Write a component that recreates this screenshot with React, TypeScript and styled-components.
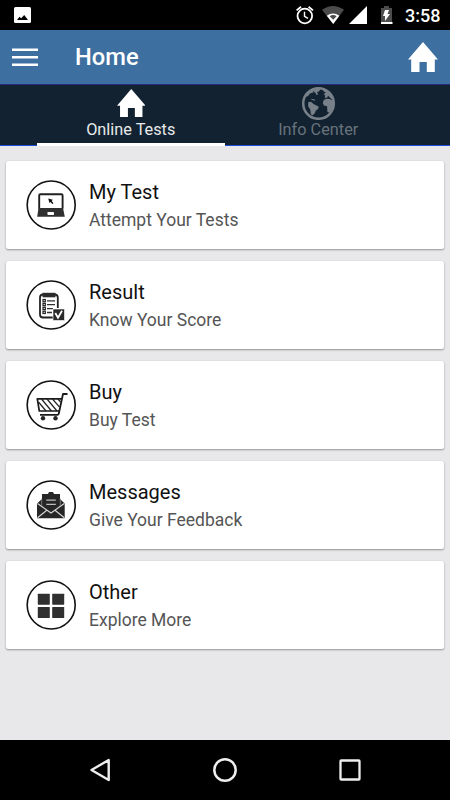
import React from "react";
import styled, { createGlobalStyle } from "styled-components";

const GlobalStyle = createGlobalStyle`
  * { box-sizing: border-box; }
  html, body { margin: 0; padding: 0; }
  body { font-family: Roboto, "Noto Sans", sans-serif; background: #e8e8ea; }
  svg { display: block; flex: none; }
`;

const Screen = styled.div`
  width: 450px;
  height: 800px;
  display: flex;
  flex-direction: column;
  overflow: hidden;
  background: #e8e8ea;
`;

const StatusBar = styled.div`
  height: 30px;
  flex: none;
  background: #000;
  display: flex;
  align-items: center;
  justify-content: space-between;
  padding: 0 10px 0 14px;
`;

const StatusGroup = styled.div`
  display: flex;
  align-items: center;
`;

const Clock = styled.span`
  color: #fff;
  font-size: 18px;
  font-weight: 500;
  line-height: 30px;
  width: 35px;
  margin: 1px 0 0 11px;
  white-space: nowrap;
`;

const AppBar = styled.header`
  height: 55px;
  flex: none;
  background: #3e6fa1;
  border-bottom: 1px solid #29287c;
  display: flex;
  align-items: center;
  padding: 0 12px;
`;

const Title = styled.h1`
  flex: 1;
  margin: 0 0 0 37px;
  color: #fff;
  font-size: 23.7px;
  font-weight: 500;
  line-height: 54px;
`;

const TabBar = styled.nav`
  height: 61px;
  flex: none;
  background: #122231;
  border-bottom: 1px solid #1f4fd8;
  display: flex;
  padding: 0 38px 0 37px;
`;

const Tab = styled.div<{ $active?: boolean }>`
  width: 187.5px;
  height: 61px;
  display: flex;
  flex-direction: column;
  align-items: center;
  padding-top: 1px;
  border-bottom: ${(p) => (p.$active ? "3px solid #fff" : "0")};
`;

const TabIconBox = styled.div`
  height: 34px;
  display: flex;
  align-items: center;
`;

const TabLabel = styled.span<{ $active?: boolean }>`
  font-size: 16.3px;
  line-height: 19px;
  color: ${(p) => (p.$active ? "#e9e9e9" : "#68727b")};
`;

const List = styled.main`
  flex: 1;
  display: flex;
  flex-direction: column;
  gap: 12px;
  padding: 15px 6px 0;
`;

const Card = styled.section`
  height: 88px;
  flex: none;
  background: #fff;
  border-radius: 2px;
  box-shadow: 0 1px 2px rgba(0, 0, 0, 0.36), 0 0 1px rgba(0, 0, 0, 0.12);
  display: flex;
  align-items: center;
  padding-left: 20px;
  gap: 13px;
`;

const CardText = styled.div`
  display: flex;
  flex-direction: column;
  padding-top: 2px;
`;

const CardTitle = styled.div`
  font-size: 20px;
  line-height: 28px;
  color: #111;
`;

const CardSubtitle = styled.div`
  font-size: 17.5px;
  line-height: 28px;
  color: #555;
`;

const NavBar = styled.footer`
  height: 60px;
  flex: none;
  background: #000;
  display: flex;
  align-items: center;
  justify-content: center;
  gap: 97px;
`;

const PictureIcon = () => (
  <svg width="17" height="16" viewBox="0 0 17 16">
    <rect width="17" height="16" rx="1.5" fill="#fff" />
    <path d="M3 13L5.5 9.8L7.2 11.3L10.2 8L14 13Z" fill="#000" />
  </svg>
);

const StatusIcons = () => (
  <svg width="100" height="26" viewBox="294 2 100 26">
    <g fill="none" stroke="#fff">
      <circle cx="304.8" cy="16" r="7.3" strokeWidth="1.8" />
      <path d="M304.5 11.7V16.3L308 18.4" strokeWidth="1.4" />
      <path d="M296.6 10.4L301 6.7M313 10.4L308.6 6.7" strokeWidth="1.8" />
    </g>
    <path d="M322 9.8Q333 2.1 344 9.8L333.2 24Z" fill="#4c4c4c" />
    <path d="M326.8 15.7Q333 11.2 339.4 15.7L333.2 24Z" fill="#fff" />
    <path d="M329.7 16.2Q333 13.7 336.6 16.2L333.2 19.8Z" fill="#4c4c4c" />
    <path d="M367 6V24H349Z" fill="#fff" />
    <path d="M381 8H384V6H389V8H392V24H381Z" fill="#4c4c4c" />
    <path d="M381 22H392.5V24H381Z" fill="#fff" />
    <path d="M385 10H389L387.5 14H390L385 21V16H383Z" fill="#fff" />
  </svg>
);

const MenuIcon = () => (
  <svg width="26" height="20" viewBox="0 0 26 20">
    <path d="M0 2.7H26M0 10.2H26M0 17.8H26" stroke="#fff" strokeWidth="2.5" />
  </svg>
);

const HomeIcon = ({ size }: { size: number }) => (
  <svg width={size} height={size} viewBox="0 0 30 30">
    <path d="M15 0L30 17.5H26.8V30H18.8V20H11.5V30H3.2V17.5H0Z" fill="#fff" />
  </svg>
);

const GlobeIcon = () => (
  <svg width="34" height="34" viewBox="0 0 34 34">
    <circle cx="17.5" cy="17.5" r="15.3" fill="none" stroke="#78818a" strokeWidth="2.5" />
    <g fill="#78818a">
      <path d="M7.2 16.3L10 15.8L12.5 18L17.8 20.8L17 23L14.7 24.7L13.8 27.2L11.3 29.5L9.8 28L9.3 23.5L7.2 20.5Z" />
      <path d="M25.2 12.8L28.8 13L32 14.5L32.5 19L30.5 24L28.5 26.8L26.4 26L26.1 20.2L23 19.5L21.8 17.3L22.6 14.3Z" />
      <path d="M5 9L9.8 4L15 2.3L14.2 4.5L11.8 5.2L12.8 6.2L9 7.6L7.5 9.5L5.5 11Z" />
      <path d="M14 3.2L19.5 2.6L18.2 5.2L16 6.3L17.2 8.3L15.3 9L14.4 6.4L12.5 6Z" />
      <path d="M21 2.4L27 5L31.2 10.2L31.8 14L28.5 11.2L27 9.5L26.2 11.7L23.7 11.7L24.2 9.2L22.6 8.2L24.7 6.6L22.5 5.2Z" />
      <path d="M10.3 12.8L14.2 13.7L13.8 14.7L10.5 13.8Z" />
    </g>
  </svg>
);

const LaptopArt = () => (
  <>
    <rect x="13.2" y="14.2" width="23.4" height="15" rx="1.2" fill="#fff" stroke="#202020" strokeWidth="1.9" />
    <path d="M12.5 28H37L38.8 36.8H11.2Z" fill="#303030" />
    <rect x="21.5" y="32" width="6.5" height="3" rx=".4" fill="#fff" />
    <path d="M22.2 18.6L26.8 19.8L25.7 21L27.5 23.2L26.4 24L24.5 22L23.5 23Z" fill="#111" />
  </>
);

const ResultArt = () => (
  <>
    <path d="M28 37.5H17Q14 37.5 14 34.5V17.5Q14 14.5 17 14.5H28.5Q31.8 14.5 31.8 17.5V28" fill="none" stroke="#222" strokeWidth="1.8" />
    <rect x="16.5" y="12.8" width="13" height="4.5" fill="#2b2b2b" />
    <path d="M21 20.8H29M21 24.7H29M21 28.6H27M21 32.5H26" stroke="#303030" strokeWidth="1.3" />
    <g fill="#fff" stroke="#222" strokeWidth="1.2">
      <rect x="17" y="19.5" width="2.3" height="2.3" />
      <rect x="17" y="23.4" width="2.3" height="2.3" />
      <rect x="17" y="27.3" width="2.3" height="2.3" />
      <rect x="17" y="31.2" width="2.3" height="2.3" />
    </g>
    <rect x="27" y="29" width="11.5" height="11.5" fill="#292929" stroke="#fff" strokeWidth=".6" />
    <path d="M29.3 33L32 37.7L36 30.7" fill="none" stroke="#fff" strokeWidth="1.8" />
  </>
);

const CartArt = () => (
  <>
    <path d="M35.5 18.8H11.3L13.3 31H33" fill="none" stroke="#1b1b1b" strokeWidth="1.7" strokeLinejoin="round" />
    <path d="M41.5 14H37L32.8 33.5Q32.5 34.8 31.3 34.8H14" fill="none" stroke="#1b1b1b" strokeWidth="1.8" strokeLinejoin="round" />
    <path d="M12.5 22L20 31M15.5 19L25.5 31M21 19L31 31M26.5 19L33.5 27.2M32 19L34.5 22" stroke="#222" strokeWidth="1.2" />
    <circle cx="17" cy="38.3" r="2.2" fill="#262626" />
    <circle cx="29.5" cy="38.3" r="2.2" fill="#262626" />
  </>
);

const MailArt = () => (
  <>
    <path d="M11 23.5L16 19V14H22L23 12H27L28 14H34V19L38.7 23.5V38.3H11Z" fill="#262626" />
    <path d="M11.5 23.5L25 33L38.3 23.5M11.5 37.8L20.5 30.5M38.3 37.8L29.3 30.5" fill="none" stroke="#d8d8d8" strokeWidth="1.1" />
    <path d="M15.7 18.5V26M34.3 18.5V26" stroke="#999" strokeWidth=".7" />
    <path d="M20.3 20.2H29.8M20.3 24.3H29.8" stroke="#bdbdbd" strokeWidth="1.3" />
  </>
);

const GridArt = () => (
  <g fill="#303030">
    <rect x="11.8" y="13.7" width="12" height="11" rx=".6" />
    <rect x="26.2" y="13.7" width="12" height="11" rx=".6" />
    <rect x="11.8" y="27" width="12" height="11" rx=".6" />
    <rect x="26.2" y="27" width="12" height="11" rx=".6" />
  </g>
);

const CircleIcon = ({ children }: { children: React.ReactNode }) => (
  <svg width="50" height="50" viewBox="0 0 50 50">
    <circle cx="25.2" cy="25" r="24" fill="none" stroke="#111" strokeWidth="1.6" />
    {children}
  </svg>
);

const items = [
  { title: "My Test", subtitle: "Attempt Your Tests", art: <LaptopArt /> },
  { title: "Result", subtitle: "Know Your Score", art: <ResultArt /> },
  { title: "Buy", subtitle: "Buy Test", art: <CartArt /> },
  { title: "Messages", subtitle: "Give Your Feedback", art: <MailArt /> },
  { title: "Other", subtitle: "Explore More", art: <GridArt /> },
];

export default function App() {
  return (
    <Screen>
      <GlobalStyle />
      <StatusBar>
        <PictureIcon />
        <StatusGroup>
          <StatusIcons />
          <Clock>3:58</Clock>
        </StatusGroup>
      </StatusBar>
      <AppBar>
        <MenuIcon />
        <Title>Home</Title>
        <HomeIcon size={30} />
      </AppBar>
      <TabBar>
        <Tab $active>
          <TabIconBox><HomeIcon size={28.5} /></TabIconBox>
          <TabLabel $active>Online Tests</TabLabel>
        </Tab>
        <Tab>
          <TabIconBox><GlobeIcon /></TabIconBox>
          <TabLabel>Info Center</TabLabel>
        </Tab>
      </TabBar>
      <List>
        {items.map((item) => (
          <Card key={item.title}>
            <CircleIcon>{item.art}</CircleIcon>
            <CardText>
              <CardTitle>{item.title}</CardTitle>
              <CardSubtitle>{item.subtitle}</CardSubtitle>
            </CardText>
          </Card>
        ))}
      </List>
      <NavBar>
        <svg width="28" height="28" viewBox="0 0 28 28">
          <path d="M5.5 14L22.7 4V24Z" fill="none" stroke="#eee" strokeWidth="2.4" strokeLinejoin="round" />
        </svg>
        <svg width="28" height="28" viewBox="0 0 28 28">
          <circle cx="14" cy="14" r="10.7" fill="none" stroke="#eee" strokeWidth="2.5" />
        </svg>
        <svg width="28" height="28" viewBox="0 0 28 28">
          <rect x="4.5" y="4.5" width="19" height="19" rx=".7" fill="none" stroke="#eee" strokeWidth="2.3" />
        </svg>
      </NavBar>
    </Screen>
  );
}
